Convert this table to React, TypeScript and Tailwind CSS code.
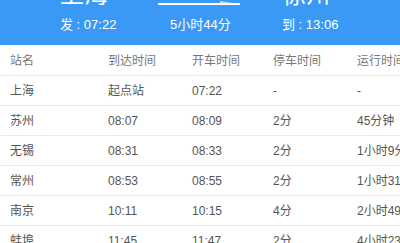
import React from "react";

const rows = [
  ["上海", "起点站", "07:22", "-", "-"],
  ["苏州", "08:07", "08:09", "2分", "45分钟"],
  ["无锡", "08:31", "08:33", "2分", "1小时9分"],
  ["常州", "08:53", "08:55", "2分", "1小时31分"],
  ["南京", "10:11", "10:15", "4分", "2小时49分"],
  ["蚌埠", "11:45", "11:47", "2分", "4小时23分"],
];

const font = { fontFamily: '"Liberation Sans", "Noto Sans CJK SC", sans-serif' };

export default function App() {
  return (
    <div className="w-[400px] h-[243px] overflow-hidden bg-white" style={font}>
      <div className="h-[45px] bg-[#3b99f6] overflow-hidden flex text-white">
        <div className="w-[158px] pl-[60px]">
          <div className="text-[24px] leading-[24px] mt-[-17px]">上海</div>
          <div className="text-[13px] leading-[14px] mt-[11px] whitespace-nowrap">发 : 07:22</div>
        </div>
        <div className="w-[124px] flex flex-col">
          <svg width="84" height="7" viewBox="0 0 84 7" className="block">
            <rect x="0" y="3" width="82" height="2" fill="#ffffff" />
            <polygon points="62,1 83,4.5 62,3.5" fill="#ffffff" opacity="0.7" />
          </svg>
          <div className="text-[13px] leading-[14px] mt-[11px] pl-[12px] whitespace-nowrap">5小时44分</div>
        </div>
        <div>
          <div className="text-[24px] leading-[24px] mt-[-17px]">徐州</div>
          <div className="text-[13px] leading-[14px] mt-[11px] whitespace-nowrap">到 : 13:06</div>
        </div>
      </div>
      <div className="grid grid-cols-[98px_84px_81px_84px_1fr] h-[31px] pt-[2px] items-center border-b border-[#ececec] text-[12px] text-[#777] pl-[10px] whitespace-nowrap overflow-hidden">
        <div>站名</div>
        <div>到达时间</div>
        <div>开车时间</div>
        <div>停车时间</div>
        <div>运行时间</div>
      </div>
      {rows.map((r) => (
        <div
          key={r[0]}
          className="grid grid-cols-[98px_84px_81px_84px_1fr] h-[30px] items-center border-b border-[#ececec] text-[12px] text-[#555] pl-[10px] whitespace-nowrap overflow-hidden"
        >
          {r.map((c, i) => (
            <div key={i}>{c}</div>
          ))}
        </div>
      ))}
    </div>
  );
}
